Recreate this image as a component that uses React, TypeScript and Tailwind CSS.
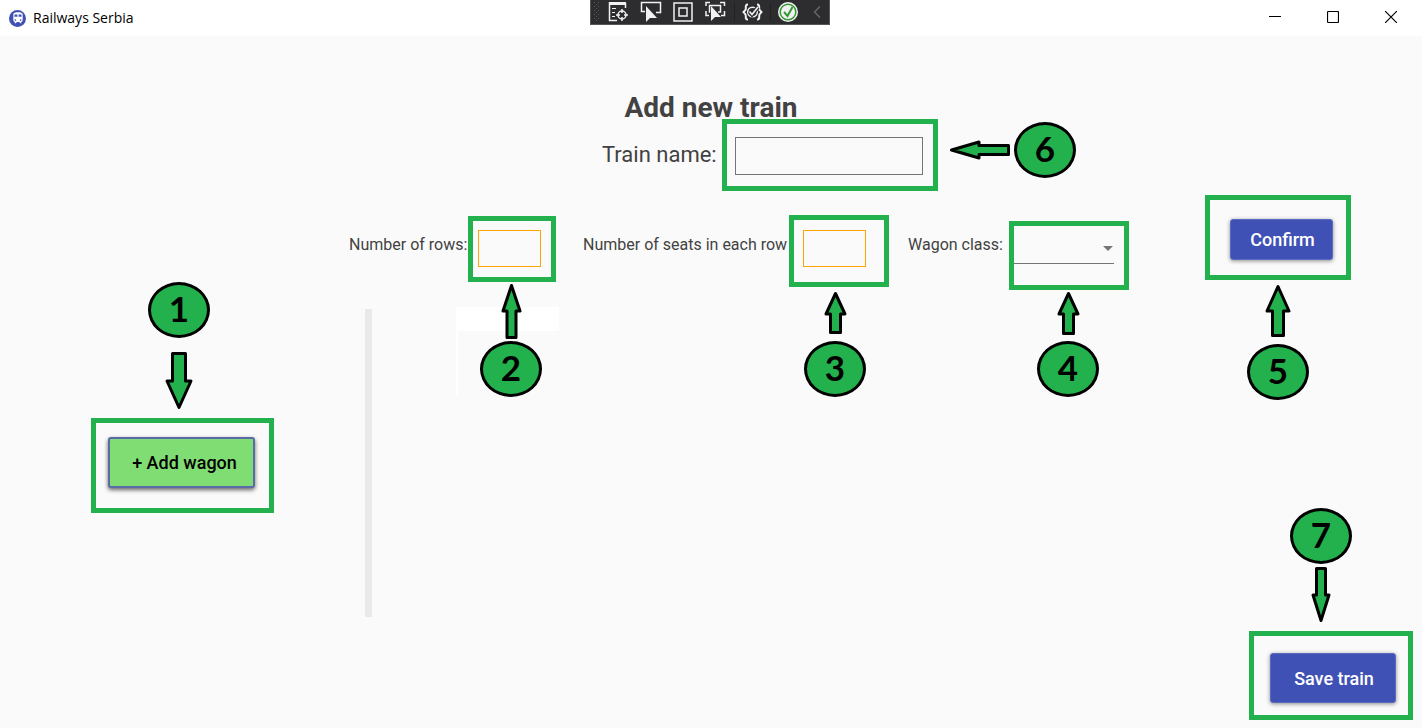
import type { ReactNode } from "react";
import { MdTrain } from "react-icons/md";

type Direction = "up" | "down" | "left";

interface ArrowProps {
  direction: Direction;
  width: number;
  length: number;
  head: number;
  shaft: number;
}

/* The outline is built pointing up, then mapped to the wanted direction. */
function Arrow({ direction, width, length, head, shaft }: ArrowProps) {
  const mid = width / 2;
  const half = (shaft - 3) / 2;
  const outline: [number, number][] = [
    [mid, 2.5],
    [width - 2, head],
    [mid + half, head],
    [mid + half, length - 1.5],
    [mid - half, length - 1.5],
    [mid - half, head],
    [2, head],
  ];
  const points = outline
    .map(([x, y]) => {
      if (direction === "down") return [x, length - y];
      if (direction === "left") return [y, x];
      return [x, y];
    })
    .map((p) => p.join(","))
    .join(" ");
  const sideways = direction === "left";
  return (
    <svg
      width={sideways ? length : width}
      height={sideways ? width : length}
      className="block overflow-visible"
      aria-hidden="true"
    >
      <polygon points={points} fill="#22b14c" stroke="#000" strokeWidth="3" strokeLinejoin="round" />
    </svg>
  );
}

function Badge({ children }: { children: ReactNode }) {
  return (
    <span className="flex h-14 w-[62px] items-center justify-center rounded-[50%] border-[3px] border-black bg-[#22b14c] pb-1 font-[Lato,sans-serif] text-[35px] leading-none font-bold text-black">
      {children}
    </span>
  );
}

function Frame({ className, children }: { className: string; children: ReactNode }) {
  return <div className={`relative shrink-0 border-[5px] border-[#22b14c] ${className}`}>{children}</div>;
}

function NumberBox({ id }: { id: string }) {
  return <input id={id} type="text" className="block h-[37px] w-[63px] border border-[#ffa500] px-2" />;
}

const labelStyle = "mt-[38px] shrink-0 text-[16px] leading-6 whitespace-nowrap";
const primaryButton =
  "rounded-[3px] border border-[#5c6bc0] bg-[#3f51b5] pl-[2px] text-[18px] font-medium text-white shadow-[0_1px_4px_rgba(0,0,0,0.45)]";

function DebugToolbar() {
  return (
    <div className="absolute top-0 left-1/2 -ml-[121px] h-[25px] w-60 border-x border-b border-[#55555a] bg-[#2d2d30]">
      <svg width="238" height="24" viewBox="591 0 238 24" fill="none" stroke="#f1f1f1" aria-hidden="true">
        <g fill="#59595d" stroke="none">
          {[2, 6, 10, 14, 18].map((y) => (
            <g key={y}>
              <rect x="594" y={y} width="1" height="1" />
              <rect x="598" y={y} width="1" height="1" />
              <rect x="596" y={y + 2} width="1" height="1" />
            </g>
          ))}
        </g>
        <path d="M609.500 3.500H625M609.500 2V20.500H617M625.500 3V8" strokeWidth="1.500" />
        <path d="M609 3.500H626" strokeWidth="3" />
        <path d="M612 8.500h4M612 12.500h3M612 16.500h3" />
        <circle cx="622" cy="15" r="4" strokeWidth="1.500" />
        <path d="M622 9v4M622 17v4M616 15h4M624 15h4" strokeWidth="1.500" />
        <path d="M645 11.500H641.500V2.500H660.500V12.500H656" strokeWidth="1.500" />
        <path d="M646 6V22L650 18H657Z" fill="#f1f1f1" stroke="none" />
        <rect x="674" y="3" width="18" height="18" strokeWidth="1.500" />
        <rect x="679" y="8" width="8" height="8" strokeWidth="1.500" />
        <path d="M706 6V2.500H710M720 2.500H724.500V6M706 11V15.500H709M724.500 11V15.500H721" strokeWidth="1.500" />
        <path d="M710 12H709.500V5.500H720.500V12H718" strokeWidth="1.500" />
        <path d="M711 6V21L715 17H721Z" fill="#f1f1f1" stroke="none" />
        <path d="M734.500 3V21M770.500 3V21" stroke="#222224" />
        <path
          d="M748 4.500C744.500 4.500 746.500 8 745.500 10L743.500 12L745.500 14.500C746.500 17 744.500 19.500 748 19.500M757 4.500C760.500 4.500 758.500 8 759.500 10L761.500 12L759.500 14.500C758.500 17 760.500 19.500 757 19.500"
          strokeWidth="2"
        />
        <circle cx="752.500" cy="12" r="4.800" strokeWidth="1.500" />
        <path d="M749.500 11.500L752 14.500L758 7" stroke="#2d2d30" strokeWidth="4" />
        <path d="M749.500 11.500L752 14.500L758 7" strokeWidth="1.700" />
        <circle cx="788" cy="12" r="10" fill="#f1f1f1" stroke="none" />
        <circle cx="788" cy="12" r="7.800" stroke="#339933" strokeWidth="1.500" />
        <path d="M784 12L787.500 16L792.500 7" stroke="#339933" strokeWidth="2" />
        <path d="M820 6.500L814.500 12L820 17.500" stroke="#66666a" strokeWidth="1.500" />
      </svg>
    </div>
  );
}

function TitleBar() {
  return (
    <header className="relative flex h-9 shrink-0 items-center bg-white pl-[9px] text-black">
      <span className="flex size-[17px] items-center justify-center rounded-full bg-[#3f51b5] text-white">
        <MdTrain size={14} />
      </span>
      <span className="ml-[7px] font-['Open_Sans','Noto_Sans',sans-serif] text-[14px] leading-5">Railways Serbia</span>
      <DebugToolbar />
      <div className="mr-[25px] mb-[2px] ml-auto flex gap-[46px]">
        <button type="button" aria-label="Minimize">
          <svg width="12" height="12" className="block" stroke="currentColor" fill="none">
            <path d="M0 5.500H12" />
          </svg>
        </button>
        <button type="button" aria-label="Maximize">
          <svg width="12" height="12" className="block" stroke="currentColor" fill="none">
            <rect x="0.500" y="0.500" width="11" height="11" rx="1" strokeWidth="1.200" />
          </svg>
        </button>
        <button type="button" aria-label="Close">
          <svg width="12" height="12" className="block" stroke="currentColor" fill="none">
            <path d="M0 0L12 12M12 0L0 12" strokeWidth="1.200" />
          </svg>
        </button>
      </div>
    </header>
  );
}

export default function App() {
  return (
    <div className="flex min-h-screen flex-col bg-[#fafafa] font-[Roboto,sans-serif] text-[#424242]">
      <TitleBar />
      <main className="flex flex-1 flex-col">
        <h1 className="pt-[61px] text-center text-[28px] leading-[22px] font-bold">Add new train</h1>

        <div className="flex justify-center pl-[118px]">
          <label htmlFor="train-name" className="w-[120px] pt-5 text-[22px] leading-8 whitespace-nowrap">
            Train name:
          </label>
          <Frame className="pt-[13px] pr-[10px] pb-[11px] pl-2">
            <input id="train-name" type="text" className="block h-[38px] w-[188px] border border-[#757575] px-2" />
            <div className="absolute top-[-2px] left-full ml-4 flex items-center gap-1">
              <Arrow direction="left" width={20} length={61} head={30} shaft={12} />
              <Badge>6</Badge>
            </div>
          </Frame>
        </div>

        <div className="flex items-start pt-1 pl-[349px]">
          <label htmlFor="rows" className={`${labelStyle} w-[119px]`}>
            Number of rows:
          </label>
          <Frame className="mt-[21px] pt-[9px] pr-[10px] pb-[10px] pl-[5px]">
            <NumberBox id="rows" />
            <div className="absolute top-full left-[7px] mt-[6px] flex flex-col items-center gap-[2px]">
              <Arrow direction="up" width={21} length={56} head={28} shaft={12} />
              <Badge>2</Badge>
            </div>
          </Frame>

          <label htmlFor="seats" className={`${labelStyle} ml-[27px] w-[206px]`}>
            Number of seats in each row
          </label>
          <Frame className="mt-5 pt-[10px] pr-[18px] pb-[15px] pl-[9px]">
            <NumberBox id="seats" />
            <div className="absolute top-full left-[10px] mt-[9px] flex flex-col items-center gap-[7px]">
              <Arrow direction="up" width={23} length={43} head={23} shaft={13} />
              <Badge>3</Badge>
            </div>
          </Frame>

          <label htmlFor="wagon-class" className={`${labelStyle} ml-[19px] w-[101px]`}>
            Wagon class:
          </label>
          <Frame className="mt-[26px] pr-[10px] pb-[21px]">
            <select
              id="wagon-class"
              className="block h-[38px] w-[100px] appearance-none border-b border-[#757575] bg-transparent px-2"
            >
              <option value=""></option>
            </select>
            <svg
              width="10"
              height="5"
              className="pointer-events-none absolute top-5 right-[11px]"
              aria-hidden="true"
            >
              <path d="M0 0H10L5 5Z" fill="#757575" />
            </svg>
            <div className="absolute top-full left-[23px] mt-[6px] flex flex-col items-center gap-[6px]">
              <Arrow direction="up" width={23} length={44} head={23} shaft={13} />
              <Badge>4</Badge>
            </div>
          </Frame>

          <Frame className="mr-[71px] ml-auto pt-[19px] pr-[13px] pb-[15px] pl-[20px]">
            <button type="button" className={`${primaryButton} block h-[41px] w-[103px]`}>
              Confirm
            </button>
            <div className="absolute top-full left-[37px] mt-[9px] flex flex-col items-center gap-[7px]">
              <Arrow direction="up" width={26} length={53} head={27} shaft={14} />
              <Badge>5</Badge>
            </div>
          </Frame>
        </div>

        <div className="flex flex-1 items-start">
          <aside className="w-[365px] shrink-0 pt-32 pl-[91px]">
            <Frame className="w-[183px] pt-[14px] pr-[13px] pb-5 pl-3">
              <button
                type="button"
                className="block h-[51px] w-[147px] rounded-[3px] border-2 border-[#5a6ba8] bg-[#80dd74] pl-[6px] text-[18px] font-medium text-black shadow-[0_2px_4px_rgba(0,0,0,0.6)]"
              >
                + Add wagon
              </button>
              <div className="absolute bottom-full left-[52px] mb-[13px] flex flex-col items-center gap-[14px]">
                <Badge>1</Badge>
                <Arrow direction="down" width={28} length={58} head={29} shaft={16} />
              </div>
            </Frame>
          </aside>

          <div className="mt-[19px] h-[308px] w-[7px] shrink-0 bg-[#e9e9e9]" />

          <div className="mt-[17px] ml-[84px] shrink-0">
            <div className="h-6 w-[103px] bg-white" />
            <div className="h-[65px] w-[2px] bg-white" />
          </div>

          <Frame className="mr-[9px] mb-2 ml-auto self-end pt-[17px] pr-[12px] pb-3 pl-4">
            <button type="button" className={`${primaryButton} block h-[50px] w-[126px]`}>
              Save train
            </button>
            <div className="absolute bottom-full left-9 mb-[13px] flex flex-col items-center gap-[3px]">
              <Badge>7</Badge>
              <Arrow direction="down" width={20} length={56} head={28} shaft={12} />
            </div>
          </Frame>
        </div>
      </main>
    </div>
  );
}
